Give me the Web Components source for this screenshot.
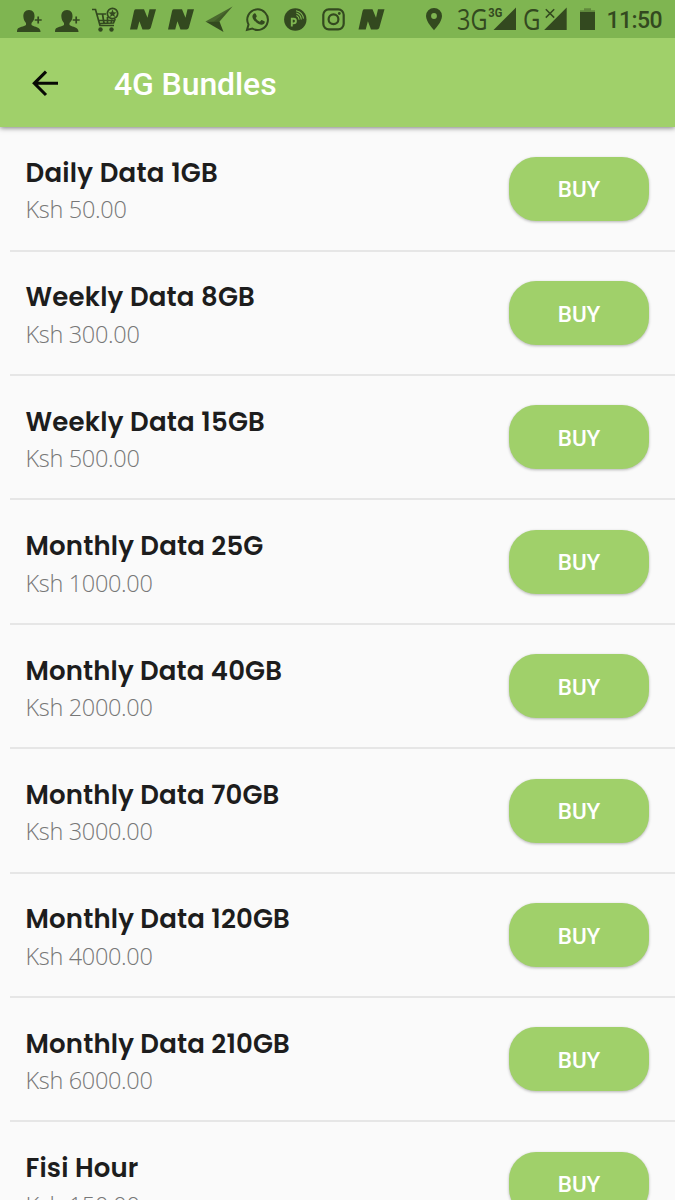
<!DOCTYPE html>
<html lang="en">
<head>
<meta charset="utf-8">
<title>4G Bundles</title>
<style>
html,body{margin:0;height:1200px;overflow:hidden;background:#fafafa}
</style>
</head>
<body>
<bundle-app></bundle-app>
<script>
const make = (name, html, setup) => customElements.define(name, class extends HTMLElement {
  connectedCallback() {
    if (this.shadowRoot) return;
    const root = this.attachShadow({ mode: 'open' });
    const t = document.createElement('template');
    t.innerHTML = html;
    root.append(t.content.cloneNode(true));
    if (setup) setup(this, root);
  }
});

// Text line whose tracking is adjusted so that it spans the given width.
make('fit-text', `<style>:host{display:block;white-space:nowrap}span{display:inline-block}</style><span></span>`, (el, root) => {
  const s = root.querySelector('span');
  s.textContent = el.getAttribute('text');
  const w = s.getBoundingClientRect().width;
  const target = parseFloat(el.getAttribute('w'));
  if (target) s.style.letterSpacing = ((target - w) / s.textContent.length) + 'px';
});

make('status-bar', `
<style>
:host{display:block;position:relative;z-index:2;height:38px;background:#7fb551;color:#33491f}
svg{display:block}
text{font-family:Roboto,sans-serif;fill:#33491f}
</style>
<svg width="675" height="38" viewBox="0 0 675 38" fill="#33491f">
  <defs>
    <g id="person"><path d="M12 0c-4 0-6 3-5.600 7 .3 3 1.200 4.500 2.600 6v2c-2 1.500-7 2-8.500 4C0 20 0 21 0 22h23.500c0-1-.2-2-1-3-1.500-2-6-2.500-8-4v-2c1.500-1.500 2.700-3 3-6C17.900 3 16 0 12 0z"/><path d="M21.200 6.500v7M17.700 10h7" stroke="#33491f" stroke-width="1.700"/></g>
    <path id="n" d="M5.500 0H14l3.500 8.500L19.500 0H26l-5.200 18.500Q20.300 20.300 18.500 20.300H12.500L9.400 12 7.200 20.300H0L4 2Q4.400 0 5.500 0z"/>
  </defs>
  <use href="#person" x="17" y="10"/><use href="#person" x="55" y="10"/>
  <g fill="none" stroke="#33491f" stroke-width="1.700">
    <path d="M92 9.500h3.500l4.500 16h14M97 14h9M98.500 20.500h16M102.500 14l1.500 9.500M107.500 17v6.500M112 19.500l-1 4M99 23.500l14.500-.5 1.700-4"/>
    <circle cx="112.500" cy="13.500" r="5.200"/>
  </g>
  <path d="M112.500 9.500l1.100 2.700 2.900.2-2.200 1.800.7 2.800-2.500-1.500-2.500 1.500.7-2.800-2.200-1.800 2.900-.2z"/>
  <circle cx="100.500" cy="29.500" r="2.200"/><circle cx="111.500" cy="29.500" r="2.200"/>
  <use href="#n" x="130" y="9.300"/><use href="#n" x="168" y="9.300"/>
  <path d="M232.500 6.500L205.500 21.500l13.500.5z" opacity=".7"/><path d="M205.500 21.500L223.500 32l-4-10.500z"/><path d="M214 21.500h5.500l13-15z" opacity=".4"/>
  <g fill="none" stroke="#33491f" stroke-width="2"><path d="M248.500 24.500A10.300 10.300 0 1 1 252.300 28.500L247 29.900z"/></g>
  <path d="M253.500 14c.8-1 1.900-.9 2.300 0l.9 2.100c.2.700-.6 1.400-1 1.900 1 1.800 2.300 3 4.200 3.800l1.300-1.500c.4-.4.700-.3 1.100-.1l2.100 1c.7.400.5 1.700-.3 2.500-2.200 2-5.500.7-8-1.400-2.800-2.500-5.200-5.800-2.600-8.300z"/>
  <circle cx="295.300" cy="19.500" r="11.200"/>
  <path d="M291.800 26.500v-7.700h1.800a2.200 2.200 0 0 1 0 4.600H292" fill="none" stroke="#7fb551" stroke-width="1.900"/>
  <path d="M296.500 15.500a5 5 0 0 1 2.600 4.300M296.300 13a7.500 7.500 0 0 1 5 6.500M296 10.700a9.500 9.500 0 0 1 7.500 8" fill="none" stroke="#7fb551" stroke-width="1.100"/>
  <g fill="none" stroke="#33491f" stroke-width="2.200"><rect x="323.300" y="9.300" width="20.400" height="20" rx="5.500"/><circle cx="333.500" cy="19.300" r="4.900"/></g><circle cx="339.300" cy="13.500" r="1.400"/>
  <use href="#n" x="358.500" y="9.300"/>
  <path fill-rule="evenodd" d="M434 8a8 8 0 0 0-8 8c0 6 8 14.200 8 14.200S442 22 442 16a8 8 0 0 0-8-8zm0 5.100a2.900 2.900 0 1 1 0 5.800 2.900 2.900 0 0 1 0-5.800z"/>
  <text x="457" y="29.500" style="font-family:'Open Sans',sans-serif" font-size="28.500" textLength="30.500" lengthAdjust="spacingAndGlyphs">3G</text>
  <text x="488.300" y="17" font-size="12" font-weight="700" textLength="14" lengthAdjust="spacingAndGlyphs">3G</text>
  <path d="M516 7.500V30h-22.500z"/>
  <text x="523" y="29.500" style="font-family:'Open Sans',sans-serif" font-size="28.500" textLength="17.500" lengthAdjust="spacingAndGlyphs">G</text>
  <path d="M545.800 9.200l8.400 8.400M554.200 9.200l-8.400 8.400" stroke="#33491f" stroke-width="1.500"/>
  <path d="M566.700 7.500V30h-22.500z"/>
  <path d="M584 8.200h7v2h4v2h-15v-2h4z" opacity=".4"/><path d="M580 12h15v18h-15z"/>
  <text x="606.500" y="28" font-size="23" font-weight="500" textLength="56">11:50</text>
</svg>`);

make('app-bar', `
<style>
:host{display:flex;position:relative;z-index:1;align-items:center;height:89px;background:#a0d06a;box-shadow:0 1px 5px rgba(0,0,0,.5);color:#fff;font:500 32px/36px Roboto,sans-serif}
svg{margin-left:29px;margin-right:53px}
fit-text{padding-top:2px}
</style>
<svg width="32" height="32" viewBox="0 0 32 32" fill="none" stroke="#080a05" stroke-width="3.100"><path d="M29 16.300H5M17 4.600L5.300 16.300 17 28"/></svg>
<fit-text text="4G Bundles" w="162.500"></fit-text>`);

make('buy-button', `
<style>
:host{display:block;width:140px;height:64px;flex:none}
button{display:flex;align-items:center;justify-content:center;width:100%;height:100%;border:0;padding:1px 0 0;border-radius:27px;background:#a0d06a;box-shadow:0 1px 3px rgba(0,0,0,.28);color:#fff;font:500 22.500px/26px Roboto,sans-serif}
</style>
<button><fit-text text="BUY" w="42.500"></fit-text></button>`);

make('bundle-row', `
<style>
:host{display:flex;box-sizing:border-box;justify-content:space-between;align-items:flex-start;height:124.400px;margin-left:10px;padding:29.500px 26px 0 15.500px;border-bottom:2px solid #e6e6e6}
.text{margin-top:-.6px}
.name{font:600 26px/34px Poppins,Inter,sans-serif;color:#1d1d1d}
.price{font:300 23.500px/32px 'Open Sans',sans-serif;color:#777;margin-top:3.400px}
</style>
<div class="text"><div class="name"></div><div class="price"></div></div><buy-button></buy-button>`, (el, root) => {
  const add = (cls, text, w) => {
    const f = document.createElement('fit-text');
    f.setAttribute('text', text); f.setAttribute('w', w);
    root.querySelector(cls).append(f);
  };
  add('.name', el.getAttribute('name'), el.getAttribute('nw'));
  add('.price', el.getAttribute('price'), el.getAttribute('pw'));
});

make('bundle-app', `
<style>:host{display:block;width:675px;height:1200px;overflow:hidden;background:#fafafa}bundle-row:first-of-type{margin-top:.2px}</style>
<status-bar></status-bar><app-bar></app-bar>
<bundle-row name="Daily Data 1GB" nw="192.500" price="Ksh 50.00" pw="101"></bundle-row>
<bundle-row name="Weekly Data 8GB" nw="229.500" price="Ksh 300.00" pw="114"></bundle-row>
<bundle-row name="Weekly Data 15GB" nw="239.500" price="Ksh 500.00" pw="114"></bundle-row>
<bundle-row name="Monthly Data 25G" nw="238" price="Ksh 1000.00" pw="127"></bundle-row>
<bundle-row name="Monthly Data 40GB" nw="256.500" price="Ksh 2000.00" pw="127"></bundle-row>
<bundle-row name="Monthly Data 70GB" nw="254" price="Ksh 3000.00" pw="127"></bundle-row>
<bundle-row name="Monthly Data 120GB" nw="264.500" price="Ksh 4000.00" pw="127"></bundle-row>
<bundle-row name="Monthly Data 210GB" nw="264.500" price="Ksh 6000.00" pw="127"></bundle-row>
<bundle-row name="Fisi Hour" nw="113" price="Ksh 150.00" pw="114"></bundle-row>`);
</script>
</body>
</html>
